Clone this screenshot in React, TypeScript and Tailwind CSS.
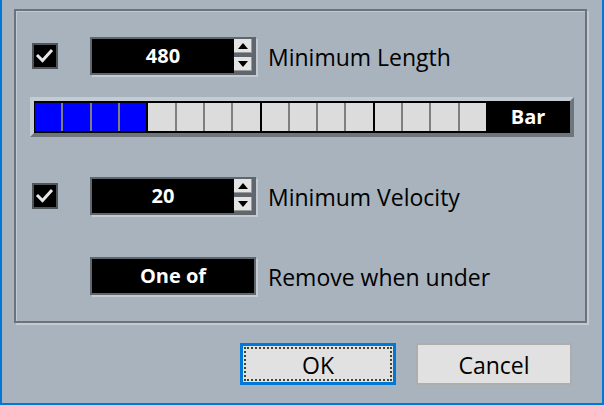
import React from "react";

const SpinBox = ({ value }: { value: string }) => (
  <div className="flex w-[166px] h-[38px] border-2 border-[#5f666d] bg-black shadow-[2px_2px_0_#c3cad2]">
    <div className="flex-1 flex items-center justify-center text-white font-bold text-[20px] leading-none">
      {value}
    </div>
    <div className="flex flex-col gap-[4px] w-[20px] pr-[2px] pb-[2px] bg-[#5f666d]">
      <div className="flex items-center justify-center h-[14px] bg-[#e4e4e4] border-b border-r border-[#9a9a9a]">
        <svg width="10" height="6" viewBox="0 0 10 6">
          <polygon points="5,0 10,6 0,6" fill="#000" />
        </svg>
      </div>
      <div className="flex items-center justify-center h-[14px] bg-[#e4e4e4] border-b border-r border-[#9a9a9a]">
        <svg width="10" height="6" viewBox="0 0 10 6">
          <polygon points="0,0 10,0 5,6" fill="#000" />
        </svg>
      </div>
    </div>
  </div>
);

const CheckBox = () => (
  <div className="flex items-center justify-center w-[26px] h-[26px] bg-black border-2 border-[#50555a]">
    <svg width="20" height="18" viewBox="0 0 20 18">
      <polyline
        points="3,9 7.5,13.5 16,4"
        fill="none"
        stroke="#e6e6e6"
        strokeWidth="3"
        strokeLinecap="square"
      />
    </svg>
  </div>
);

const Cells = () => {
  const cells = Array.from({ length: 16 }, (_, i) => i);
  return (
    <div className="flex w-[451px] h-[28px]">
      {cells.map((i) => (
        <React.Fragment key={i}>
          {i > 0 && (
            <div
              className={
                i % 4 === 0 ? "w-[2px] bg-black" : "w-[2px] bg-[#7f7f7f]"
              }
            />
          )}
          <div className={i < 4 ? "flex-1 bg-[#0000ff]" : "flex-1 bg-[#dcdcdc]"} />
        </React.Fragment>
      ))}
    </div>
  );
};

export default function App() {
  return (
    <div className="flex flex-col w-[604px] h-[405px] bg-[#a8b3be] border-l-2 border-r-2 border-b-2 border-[#0078d7] font-['Open_Sans',sans-serif] text-black">
      <div className="flex flex-col ml-[12px] mt-[9px] w-[573px] h-[314px] border-2 border-[#6b727a] shadow-[inset_1px_1px_0_#c3cad2,2px_2px_0_#c3cad2] pt-[26px]">
        <div className="flex items-center pl-[16px]">
          <CheckBox />
          <div className="ml-[32px]">
            <SpinBox value="480" />
          </div>
          <span className="ml-[12px] pt-[3px] text-[23px] leading-none">Minimum Length</span>
        </div>

        <div className="flex ml-[14px] mt-[22px] w-[544px] h-[40px] border-4 border-t-[#c3cbd3] border-l-[#c3cbd3] border-r-[#6e757c] border-b-[#6e757c] bg-black pt-[2px] pb-[2px] pl-[1px]">
          <Cells />
          <div className="flex-1 flex items-center justify-center text-white font-bold text-[20px] leading-none">
            Bar
          </div>
        </div>

        <div className="flex items-center pl-[16px] mt-[40px]">
          <CheckBox />
          <div className="ml-[32px]">
            <SpinBox value="20" />
          </div>
          <span className="ml-[12px] pt-[3px] text-[23px] leading-none">Minimum Velocity</span>
        </div>

        <div className="flex items-center pl-[74px] mt-[42px]">
          <div className="flex items-center justify-center w-[166px] h-[38px] border-2 border-[#5f666d] bg-black shadow-[2px_2px_0_#c3cad2] text-white font-bold text-[20px] leading-none">
            One of
          </div>
          <span className="ml-[12px] pt-[3px] text-[23px] leading-none">Remove when under</span>
        </div>
      </div>

      <div className="flex justify-end gap-[20px] pr-[30px] mt-[20px]">
        <button
          type="button"
          className="w-[156px] h-[42px] border-[3px] border-[#0078d7] bg-[#e1e1e1] p-[1px]"
        >
          <div className="flex items-center justify-center w-full h-full border-2 border-dotted border-[#45452a] pt-[2px] text-[23px] leading-none">
            OK
          </div>
        </button>
        <button
          type="button"
          className="flex items-center justify-center w-[156px] h-[42px] border-2 border-[#adadad] bg-[#e1e1e1] pt-[2px] text-[23px] leading-none"
        >
          Cancel
        </button>
      </div>
    </div>
  );
}
